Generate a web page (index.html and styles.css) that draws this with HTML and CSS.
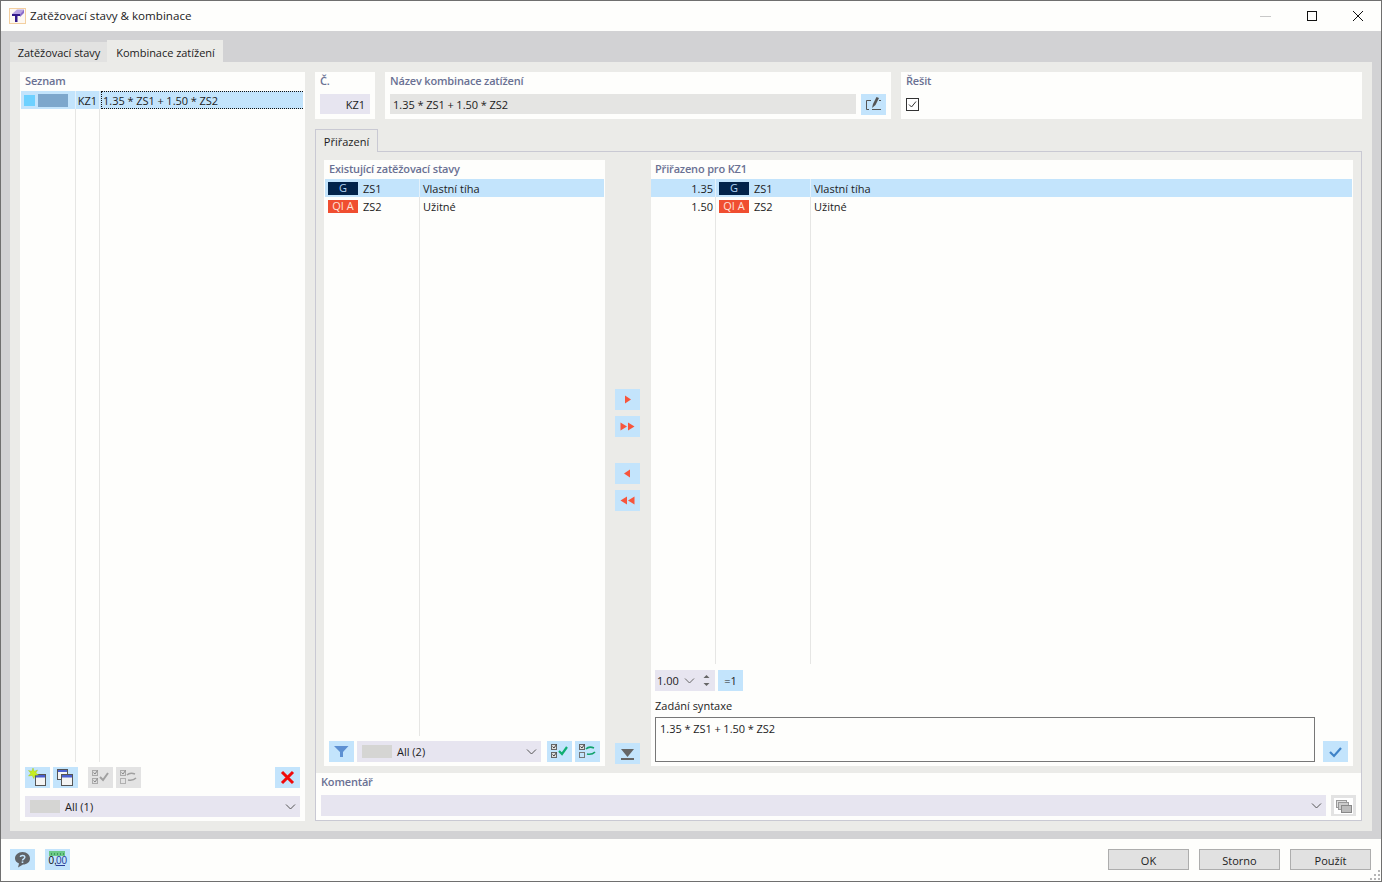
FILE: index.html
```html
<!DOCTYPE html>
<html lang="cs">
<head>
    <meta charset="UTF-8">
    <title>Zatěžovací stavy &amp; kombinace</title>
    <link rel="stylesheet" href="styles.css">
</head>
<body>
<div class="window">

    <!-- Title bar -->
    <div class="titlebar">
        <svg class="app-icon" width="17" height="16" viewBox="0 0 17 16">
            <rect x="0.5" y="0.5" width="16" height="15" fill="#fdf8f2" stroke="#f3cf9f"/>
            <polygon points="3,6 8,1.5 15,1.5 11,6" fill="#b9a4e2"/>
            <polygon points="11,6 15,1.5 15,5 11,9" fill="#8a6ccc"/>
            <polygon points="3,6 11,6 11,8 8.5,8 8.5,14 6,14 6,8 3,8" fill="#33198a"/>
        </svg>
        <span class="title">Zatěžovací stavy &amp; kombinace</span>
        <div class="win-controls">
            <svg width="12" height="12" viewBox="0 0 12 12"><line x1="0" y1="6.5" x2="11" y2="6.5" stroke="#c8c8c8"/></svg>
            <svg width="12" height="12" viewBox="0 0 12 12"><rect x="1.5" y="1.5" width="9" height="9" fill="none" stroke="#111"/></svg>
            <svg width="12" height="12" viewBox="0 0 12 12"><path d="M1 1 L11 11 M11 1 L1 11" stroke="#111" fill="none"/></svg>
        </div>
    </div>

    <div class="band">
        <div class="tabs">
            <div class="tab">Zatěžovací stavy</div>
            <div class="tab active">Kombinace zatížení</div>
        </div>

        <div class="panel">

            <!-- Left list -->
            <div class="card seznam">
                <div class="card-label">Seznam</div>
                <div class="list">
                    <div class="row row-seznam selected">
                        <div class="cell cell-swatch"><span class="sw-cyan"></span><span class="sw-blue"></span></div>
                        <div class="cell num">KZ1</div>
                        <div class="cell cell-focus">1.35 * ZS1 + 1.50 * ZS2</div>
                    </div>
                    <div class="row row-seznam filler"><div class="cell"></div><div class="cell"></div><div class="cell"></div></div>
                </div>
                <div class="toolbar seznam-tools">
                    <button class="btn">
                        <svg viewBox="0 0 25 21"><rect x="10.5" y="7.5" width="10" height="11" fill="#f4f4f4" stroke="#555"/><rect x="11" y="8" width="9" height="2.5" fill="#4a5fd0"/><polygon points="8,1 9.2,4.4 12.5,3 10.8,6 13.5,8 10,8.2 8.8,11.5 7.2,8.4 3.5,9 5.8,6.2 3.5,3.5 6.8,4.3" fill="#c8ee20" stroke="#9abf10" stroke-width="0.4"/></svg>
                    </button>
                    <button class="btn">
                        <svg viewBox="0 0 25 21"><rect x="4.5" y="2.5" width="10" height="10" fill="#f4f4f4" stroke="#555"/><rect x="5" y="3" width="9" height="2" fill="#4a5fd0"/><rect x="8.5" y="7.5" width="11" height="11" fill="#f4f4f4" stroke="#555"/><rect x="9" y="8" width="10" height="2.5" fill="#4a5fd0"/></svg>
                    </button>
                    <button class="btn disabled first-check">
                        <svg viewBox="0 0 25 21"><rect x="4.5" y="3.5" width="5" height="5" fill="#ddd" stroke="#aaa"/><path d="M5.5 5.5 L7 7 L9.5 3.5" fill="none" stroke="#888"/><rect x="4.5" y="11.5" width="5" height="5" fill="#ddd" stroke="#aaa"/><path d="M5.5 13.5 L7 15 L9.5 11.5" fill="none" stroke="#888"/><path d="M12 10 L15 13 L20 6" fill="none" stroke="#a0a0a0" stroke-width="2"/></svg>
                    </button>
                    <button class="btn disabled">
                        <svg viewBox="0 0 25 21"><rect x="4.5" y="3.5" width="5" height="5" fill="#ddd" stroke="#aaa"/><path d="M5.5 5.5 L7 7 L9.5 3.5" fill="none" stroke="#888"/><rect x="4.5" y="11.5" width="5" height="5" fill="none" stroke="#b0b0b0"/><path d="M11 8 Q14 5 19 7 M12 13 Q17 14 20 11" fill="none" stroke="#a0a0a0" stroke-width="1.6"/></svg>
                    </button>
                    <button class="btn push-right">
                        <svg viewBox="0 0 25 21"><path d="M7 5 L18 16 M18 5 L7 16" stroke="#f00a0a" stroke-width="3" fill="none"/></svg>
                    </button>
                </div>
                <div class="dropdown seznam-filter">
                    <span class="dd-swatch"></span>
                    <span>All (1)</span>
                    <svg class="chevron" width="11" height="6" viewBox="0 0 11 6"><path d="M1 0.5 L5.5 5 L10 0.5" fill="none" stroke="#555"/></svg>
                </div>
            </div>

            <!-- Right side -->
            <div class="detail">
                <div class="top-row">
                    <div class="card box-no">
                        <div class="card-label">Č.</div>
                        <div class="field field-no">KZ1</div>
                    </div>
                    <div class="card box-name">
                        <div class="card-label">Název kombinace zatížení</div>
                        <div class="name-line">
                            <div class="field field-name">1.35 * ZS1 + 1.50 * ZS2</div>
                            <button class="btn">
                                <svg viewBox="0 0 25 21"><path d="M10 6.5 H5.5 V15.5 H8" fill="none" stroke="#555"/><path d="M11 15.5 H20" stroke="#555"/><path d="M11 14 L12 10 L15.5 3 L18 4 L14.5 11 Z" fill="#555"/><path d="M18 6.5 H20" stroke="#555"/></svg>
                            </button>
                        </div>
                    </div>
                    <div class="card box-solve">
                        <div class="card-label">Řešit</div>
                        <svg class="checkbox" width="13" height="13" viewBox="0 0 13 13"><rect x="0.5" y="0.5" width="12" height="12" fill="#fff" stroke="#333"/><path d="M3 6.5 L5.5 9 L10 3.5" fill="none" stroke="#333"/></svg>
                    </div>
                </div>

                <div class="subtab">Přiřazení</div>
                <div class="subpanel">
                    <div class="assign">

                        <!-- Existing load cases -->
                        <div class="card existing">
                            <div class="card-label">Existující zatěžovací stavy</div>
                            <div class="list">
                                <div class="row row-existing selected">
                                    <div class="cell cell-case"><span class="badge badge-g">G</span><span class="case-id">ZS1</span></div>
                                    <div class="cell cell-name">Vlastní tíha</div>
                                </div>
                                <div class="row row-existing">
                                    <div class="cell cell-case"><span class="badge badge-q">QI A</span><span class="case-id">ZS2</span></div>
                                    <div class="cell cell-name">Užitné</div>
                                </div>
                                <div class="row row-existing filler"><div class="cell"></div><div class="cell"></div></div>
                            </div>
                            <div class="toolbar existing-tools">
                                <button class="btn">
                                    <svg viewBox="0 0 25 21"><polygon points="5,5 19.5,5 14,11 14,16 11,16 11,11" fill="#5d90d2"/></svg>
                                </button>
                                <div class="dropdown existing-filter">
                                    <span class="dd-swatch"></span>
                                    <span>All (2)</span>
                                    <svg class="chevron" width="11" height="6" viewBox="0 0 11 6"><path d="M1 0.5 L5.5 5 L10 0.5" fill="none" stroke="#555"/></svg>
                                </div>
                                <button class="btn">
                                    <svg viewBox="0 0 25 21"><rect x="4.5" y="3.5" width="5" height="5" fill="#ddd" stroke="#666"/><path d="M5.5 5.5 L7 7 L9.5 3.5" fill="none" stroke="#444"/><rect x="4.5" y="11.5" width="5" height="5" fill="#ddd" stroke="#666"/><path d="M5.5 13.5 L7 15 L9.5 11.5" fill="none" stroke="#444"/><path d="M12 10 L15 13 L20 6" fill="none" stroke="#0fae72" stroke-width="2.2"/></svg>
                                </button>
                                <button class="btn">
                                    <svg viewBox="0 0 25 21"><rect x="4.5" y="3.5" width="5" height="5" fill="#ddd" stroke="#666"/><path d="M5.5 5.5 L7 7 L9.5 3.5" fill="none" stroke="#444"/><rect x="4.5" y="11.5" width="5" height="5" fill="none" stroke="#777"/><path d="M11 8 Q14 5 19 7 M12 13 Q17 14 20 11" fill="none" stroke="#12a36c" stroke-width="1.7"/></svg>
                                </button>
                            </div>
                        </div>

                        <!-- Move buttons -->
                        <div class="movers">
                            <button class="btn">
                                <svg viewBox="0 0 25 21"><polygon points="10,6.5 16,10.5 10,14.5" fill="#f7553c"/></svg>
                            </button>
                            <button class="btn">
                                <svg viewBox="0 0 25 21"><polygon points="5.5,6.5 12,10.5 5.5,14.5" fill="#f7553c"/><polygon points="13,6.5 19.5,10.5 13,14.5" fill="#f7553c"/></svg>
                            </button>
                            <button class="btn back-mover">
                                <svg viewBox="0 0 25 21"><polygon points="15,6.5 9,10.5 15,14.5" fill="#f7553c"/></svg>
                            </button>
                            <button class="btn">
                                <svg viewBox="0 0 25 21"><polygon points="12,6.5 5.5,10.5 12,14.5" fill="#f7553c"/><polygon points="19.5,6.5 13,10.5 19.5,14.5" fill="#f7553c"/></svg>
                            </button>
                            <button class="btn to-bottom">
                                <svg viewBox="0 0 25 21"><polygon points="6,6 19,6 12.5,14" fill="#666"/><rect x="6" y="15" width="13" height="2" fill="#666"/></svg>
                            </button>
                        </div>

                        <!-- Assigned -->
                        <div class="card assigned">
                            <div class="card-label">Přiřazeno pro KZ1</div>
                            <div class="list">
                                <div class="row row-assigned selected">
                                    <div class="cell num">1.35</div>
                                    <div class="cell cell-case"><span class="badge badge-g">G</span><span class="case-id">ZS1</span></div>
                                    <div class="cell cell-name">Vlastní tíha</div>
                                </div>
                                <div class="row row-assigned">
                                    <div class="cell num">1.50</div>
                                    <div class="cell cell-case"><span class="badge badge-q">QI A</span><span class="case-id">ZS2</span></div>
                                    <div class="cell cell-name">Užitné</div>
                                </div>
                                <div class="row row-assigned filler"><div class="cell"></div><div class="cell"></div><div class="cell"></div></div>
                            </div>
                            <div class="factor-row">
                                <div class="dropdown factor">
                                    <span>1.00</span>
                                    <svg class="factor-chevron" width="11" height="6" viewBox="0 0 11 6"><path d="M1 0.5 L5.5 5 L10 0.5" fill="none" stroke="#666"/></svg>
                                    <svg class="spinner" width="7" height="13" viewBox="0 0 7 13"><polygon points="3.5,1 6.5,4 0.5,4" fill="#666"/><polygon points="0.5,9 6.5,9 3.5,12" fill="#666"/></svg>
                                </div>
                                <button class="btn btn-text">=1</button>
                            </div>
                            <div class="syntax-label">Zadání syntaxe</div>
                            <div class="syntax-row">
                                <div class="syntax-box">1.35 * ZS1 + 1.50 * ZS2</div>
                                <button class="btn">
                                    <svg viewBox="0 0 25 21"><path d="M7 11 L11 15 L18 7" fill="none" stroke="#3f83c8" stroke-width="2.2"/></svg>
                                </button>
                            </div>
                        </div>
                    </div>

                    <!-- Comment -->
                    <div class="card comment">
                        <div class="card-label">Komentář</div>
                        <div class="comment-line">
                            <div class="dropdown comment-input">
                                <svg class="chevron" width="11" height="6" viewBox="0 0 11 6"><path d="M1 0.5 L5.5 5 L10 0.5" fill="none" stroke="#555"/></svg>
                            </div>
                            <button class="btn disabled">
                                <svg viewBox="0 0 25 21"><rect x="3" y="3" width="19" height="16" fill="#fff"/><rect x="5.5" y="5.5" width="10" height="7" fill="#ddd" stroke="#999"/><rect x="7.5" y="7.5" width="10" height="7" fill="#ccc" stroke="#999"/><rect x="10.5" y="10.5" width="10" height="7" fill="#bbb" stroke="#888"/></svg>
                            </button>
                        </div>
                    </div>
                </div>
            </div>
        </div>
    </div>

    <!-- Bottom bar -->
    <div class="footer">
        <button class="btn">
            <svg viewBox="0 0 25 21"><path d="M12.5 3 C17 3 20 6 20 9.5 C20 13 17 15.5 13 15.5 L8 18.5 L9 14.5 C6.5 13.5 5 11.5 5 9.5 C5 6 8 3 12.5 3 Z" fill="#5f6368"/><path d="M10.3 8 C10.5 5.8 15 5.8 14.8 8.3 C14.7 9.8 12.6 9.8 12.5 11.5" fill="none" stroke="#c3e4fc" stroke-width="1.5"/><rect x="11.7" y="12.4" width="1.6" height="1.6" fill="#c3e4fc"/></svg>
        </button>
        <button class="btn">
            <svg viewBox="0 0 25 21"><rect x="4" y="2" width="16" height="5" fill="#6cc987"/><path d="M6.5 4 V6 M9.5 4 V6 M12.5 4 V6 M15.5 4 V6 M18.5 4 V6" stroke="#3e9c5c"/><text x="3.5" y="15" class="units-text">0,</text><text x="11" y="15" class="units-text units-blue">00</text><rect x="11" y="16" width="9" height="1" fill="#2a3f9a"/></svg>
        </button>
        <button class="btn-plain first-plain">OK</button>
        <button class="btn-plain">Storno</button>
        <button class="btn-plain">Použít</button>
        <svg class="grip" width="11" height="11" viewBox="0 0 11 11"><path d="M8 0h2v2H8zM4 4h2v2H4zM8 4h2v2H8zM0 8h2v2H0zM4 8h2v2H4zM8 8h2v2H8z" fill="#b5b5b5"/></svg>
    </div>
</div>
</body>
</html>
```

FILE: styles.css
```css
* {
    box-sizing: border-box;
}

body {
    margin: 0;
    font-family: "Open Sans", "Noto Sans", sans-serif;
    font-size: 11px;
    color: #1c1c1c;
    background: #fff;
}

.window {
    width: 1382px;
    height: 882px;
    border: 1px solid #6f6f6f;
    display: flex;
    flex-direction: column;
    background: #fefefc;
}

/* Title bar */
.titlebar {
    height: 30px;
    display: flex;
    align-items: center;
    padding-left: 8px;
    flex: none;
}

.title {
    margin-left: 4px;
    padding-bottom: 2px;
    font-size: 11.6px;
}

.win-controls {
    margin-left: auto;
    display: flex;
    gap: 34px;
    padding-right: 17px;
}

/* Grey band + tabs */
.band {
    flex: 1;
    min-height: 0;
    background: #d2d2d4;
    padding: 9px 9px 8px;
    display: flex;
    flex-direction: column;
}

.tabs {
    display: flex;
    align-items: flex-end;
    height: 22px;
    flex: none;
}

.tab {
    height: 20px;
    line-height: 22px;
    width: 97px;
    padding-left: 1px;
    text-align: center;
    letter-spacing: -0.03px;
    background: #e2e2e1;
}

.tab.active {
    height: 22px;
    line-height: 26px;
    width: 116px;
    padding-left: 1px;
    background: #ebebe8;
}

.panel {
    flex: 1;
    min-height: 0;
    background: #ebebe8;
    padding: 10px;
    display: flex;
    gap: 10px;
}

/* Cards */
.card {
    background: #fefefc;
    display: flex;
    flex-direction: column;
}

.card-label {
    height: 19px;
    line-height: 18px;
    padding-left: 5px;
    font-weight: 600;
    letter-spacing: -0.17px;
    color: #6a7193;
    flex: none;
}

.seznam {
    width: 285px;
    flex: none;
    padding: 0 2px 4px 1px;
}

.seznam .card-label {
    padding-left: 4px;
}

/* Lists */
.list {
    flex: 1;
    min-height: 0;
    display: flex;
    flex-direction: column;
}

.row {
    display: grid;
    height: 18px;
    line-height: 20px;
    flex: none;
}

.row.selected {
    background: #c3e4fc;
}

.row.filler {
    flex: 1;
}

.row-seznam {
    grid-template-columns: 55px 24px 1fr;
}

.row-existing {
    grid-template-columns: 95px 1fr;
}

.row-assigned {
    grid-template-columns: 65px 95px 1fr;
}

.cell {
    border-right: 1px solid #e6e6e4;
    white-space: nowrap;
    overflow: hidden;
}

.cell:last-child {
    border-right: 0;
}

.selected .cell {
    border-right-color: #e3f1fb;
}

.num {
    text-align: right;
    padding-right: 2px;
}

.cell-swatch {
    display: flex;
    align-items: center;
    padding-left: 3px;
    gap: 3px;
}

.sw-cyan {
    width: 11px;
    height: 11px;
    background: #6dd1ff;
}

.sw-blue {
    width: 30px;
    height: 13px;
    background: #7da7cc;
}

.cell-focus {
    margin-left: 1px;
    padding-left: 1px;
    line-height: 18px;
    word-spacing: -0.2px;
    border: 1px dotted #111;
}

.cell-case {
    display: flex;
    align-items: center;
    padding-left: 3px;
    gap: 5px;
}

.case-id {
    padding-top: 2px;
}

.cell-name {
    padding-left: 3px;
}

.badge {
    width: 30px;
    height: 13px;
    line-height: 12px;
    text-align: center;
    color: #fff;
}

.badge-g {
    background: #02234a;
    color: #b5d6f5;
}

.badge-q {
    background: #f04e30;
    color: #ffe3da;
}

/* Buttons */
.btn {
    width: 25px;
    height: 21px;
    padding: 0;
    border: 0;
    background: #c3e4fc;
    font: inherit;
    color: inherit;
    flex: none;
    display: block;
}

.btn svg {
    display: block;
    width: 25px;
    height: 21px;
}

.btn.disabled {
    background: #e3e3e3;
}

.btn-text {
    text-align: center;
}

.push-right {
    margin-left: auto;
}

.toolbar {
    display: flex;
    align-items: center;
    flex: none;
}

.seznam-tools {
    margin-top: 5px;
    padding: 0 3px 0 4px;
    gap: 3px;
}

.first-check {
    margin-left: 7px;
}

/* Dropdowns */
.dropdown {
    height: 21px;
    background: #e7e5f0;
    display: flex;
    align-items: center;
    position: relative;
    flex: none;
}

.dd-swatch {
    width: 30px;
    height: 13px;
    background: #d5d5d3;
    margin: 0 5px;
}

.chevron {
    position: absolute;
    right: 4px;
    top: 8px;
}

.seznam-filter {
    margin: 8px 3px 0 4px;
}

/* Top row of the detail side */
.detail {
    flex: 1;
    min-width: 0;
    display: flex;
    flex-direction: column;
}

.top-row {
    display: flex;
    gap: 10px;
    height: 47px;
    flex: none;
}

.box-no {
    width: 60px;
    padding: 0 5px;
}

.box-no .card-label,
.box-name .card-label,
.box-solve .card-label {
    padding-left: 0;
}

.box-no .card-label {
    margin-bottom: 3px;
}

.field {
    height: 20px;
    line-height: 22px;
    padding: 0 5px 0 3px;
}

.field-no {
    background: #e7e5f0;
    text-align: right;
}

.box-name {
    width: 506px;
    padding: 0 5px;
}

.box-name .card-label,
.box-solve .card-label {
    margin-bottom: 3px;
}

.name-line {
    display: flex;
    gap: 5px;
}

.field-name {
    flex: 1;
    word-spacing: -0.2px;
    background: #e5e5e3;
}

.box-solve {
    flex: 1;
    padding: 0 5px;
}

.checkbox {
    margin-top: 4px;
    display: block;
}

/* Inner tab */
.subtab {
    margin-top: 10px;
    width: 63px;
    height: 23px;
    line-height: 24px;
    text-align: center;
    border: 1px solid #c9c9d3;
    border-bottom: 0;
    background: #ebebe8;
    margin-bottom: -1px;
    position: relative;
    flex: none;
}

.subpanel {
    flex: 1;
    min-height: 0;
    border: 1px solid #c9c9d3;
    display: flex;
    flex-direction: column;
}

.assign {
    flex: 1;
    min-height: 0;
    padding: 8px 8px 0;
    display: flex;
}

.existing {
    width: 281px;
    flex: none;
    padding: 0 1px 4px;
}

.existing .card-label,
.assigned .card-label {
    padding-left: 4px;
}

.existing-tools {
    margin-top: 5px;
    padding: 0 4px;
    gap: 3px;
}

.existing-filter {
    width: 184px;
    margin-right: 3px;
}

.movers {
    width: 46px;
    flex: none;
    display: flex;
    flex-direction: column;
    align-items: flex-start;
    gap: 6px;
    padding: 229px 0 2px 10px;
}

.back-mover {
    margin-top: 20px;
}

.to-bottom {
    margin-top: auto;
}

.assigned {
    flex: 1;
    min-width: 0;
    padding-right: 1px;
    padding-bottom: 4px;
}

.factor-row {
    display: flex;
    gap: 3px;
    margin: 6px 0 0 4px;
    flex: none;
}

.factor {
    width: 60px;
    padding-left: 2px;
}

.factor-chevron {
    position: absolute;
    left: 29px;
    top: 8px;
}

.spinner {
    position: absolute;
    left: 48px;
    top: 4px;
}

.syntax-label {
    margin: 7px 0 3px 4px;
    height: 16px;
    line-height: 16px;
    flex: none;
}

.syntax-row {
    display: flex;
    align-items: flex-end;
    gap: 8px;
    margin-left: 4px;
    flex: none;
}

.syntax-box {
    width: 660px;
    height: 45px;
    border: 1px solid #777;
    padding: 3px 4px;
    word-spacing: -0.2px;
    background: #fefefc;
}

/* Comment */
.comment {
    height: 47px;
    margin-top: 7px;
    flex: none;
}

.comment-line {
    display: flex;
    gap: 5px;
    padding: 3px 5px 0;
}

.comment-input {
    flex: 1;
}

/* Footer */
.footer {
    height: 42px;
    flex: none;
    display: flex;
    align-items: flex-start;
    padding: 10px 10px 0 9px;
    gap: 10px;
    position: relative;
}

.btn-plain {
    width: 81px;
    height: 21px;
    padding: 2px 0 0;
    border: 1px solid #adadad;
    background: #e1e1e1;
    font: inherit;
    color: #1c1c1c;
}

.first-plain {
    margin-left: auto;
}

.units-text {
    font-family: "Liberation Sans", sans-serif;
    font-size: 10px;
    fill: #111;
}

.units-blue {
    fill: #2a3f9a;
}

.grip {
    position: absolute;
    right: 0;
    bottom: 0;
}
```
